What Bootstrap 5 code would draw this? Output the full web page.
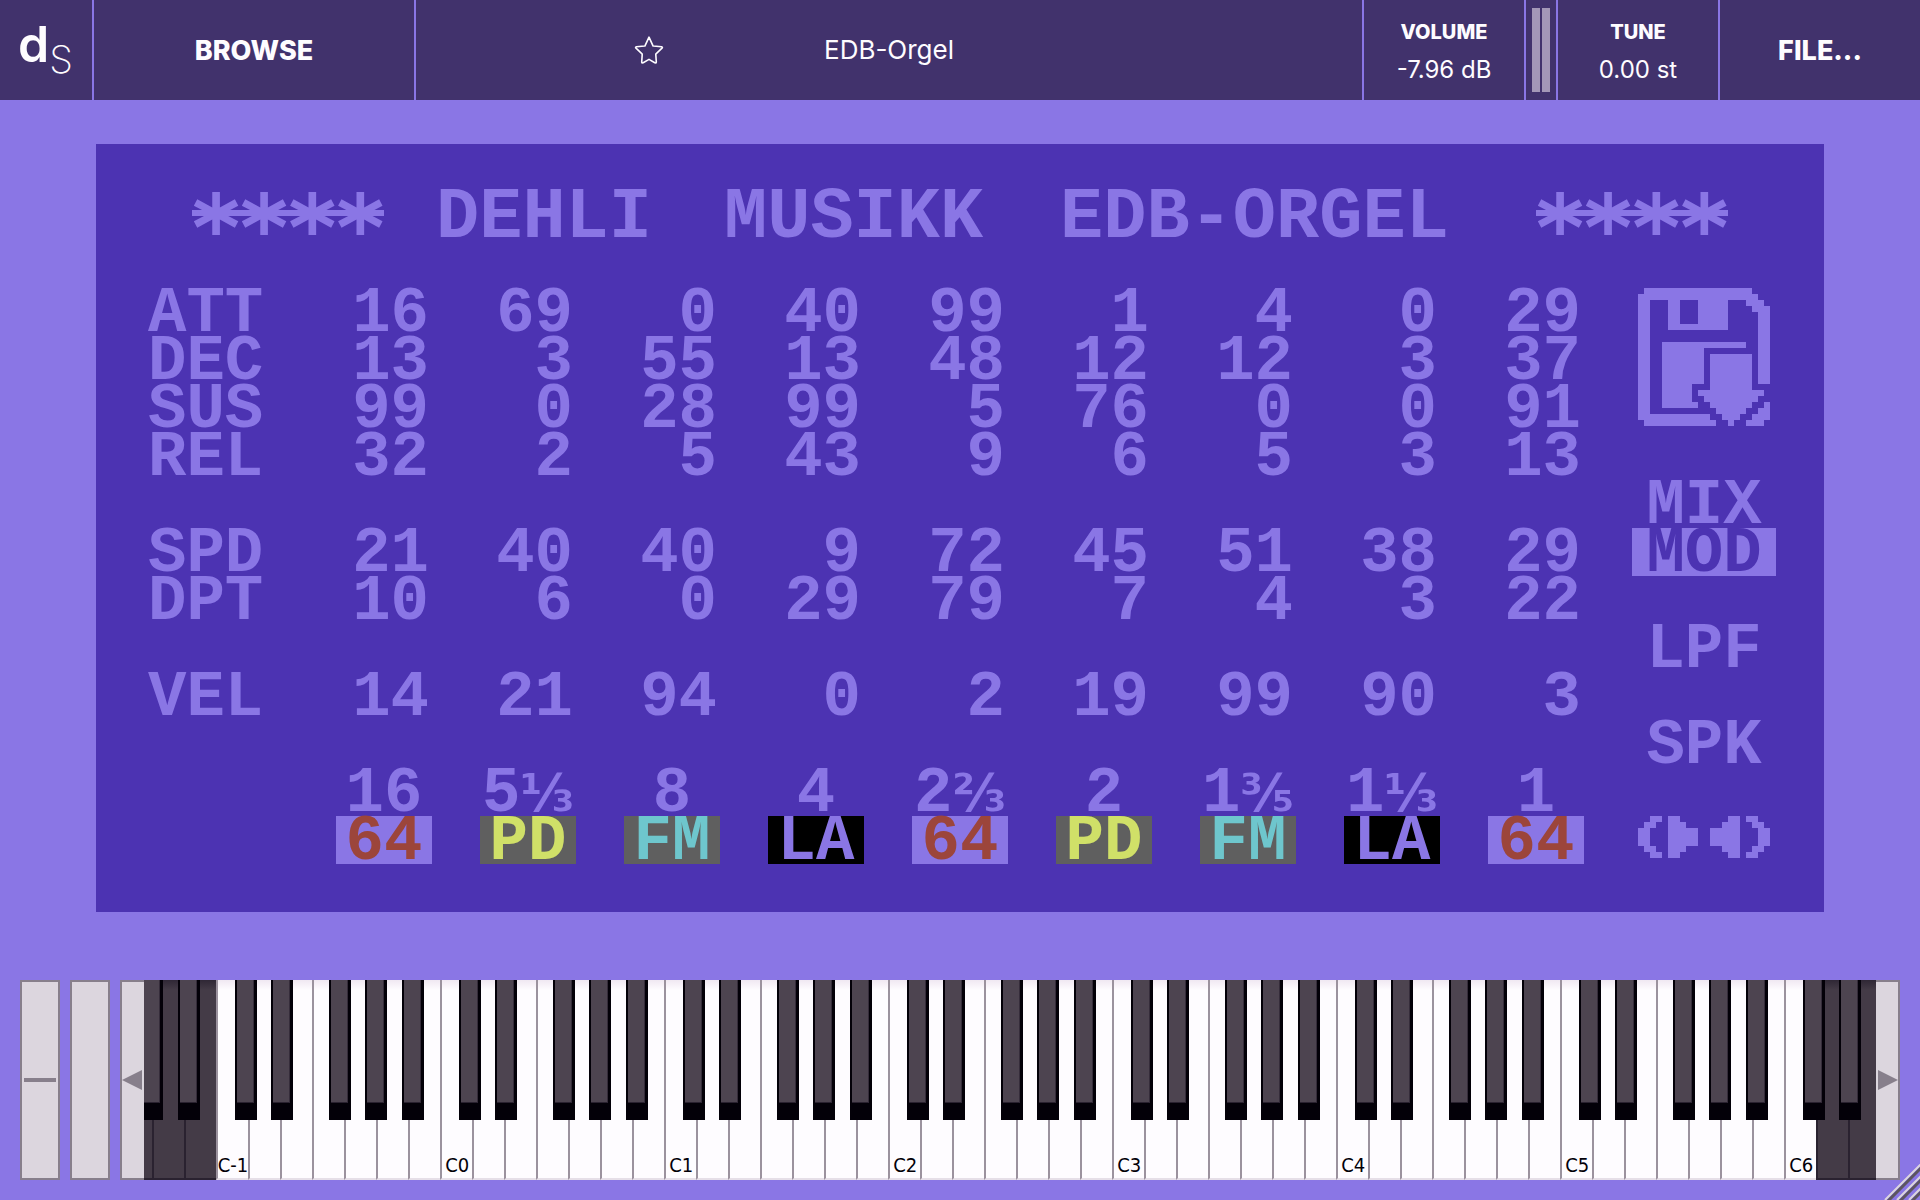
<!DOCTYPE html>
<html lang="en">
<head>
<meta charset="utf-8">
<meta name="viewport" content="width=device-width, initial-scale=1">
<title>EDB-Orgel</title>
<link href="https://cdn.jsdelivr.net/npm/bootstrap@5.3.0/dist/css/bootstrap.min.css" rel="stylesheet">
<script src="https://cdn.jsdelivr.net/npm/bootstrap@5.3.0/dist/js/bootstrap.bundle.min.js"></script>
<style>
:root { --lilac:#8a76e5; --indigo:#4c33b2; --plum:#41326c; --paper:#fefcff; --wheel:#dcd6de; --edge:#877f8b; }
body { background:var(--lilac); color:var(--paper); font-family:Inter, sans-serif; min-height:100vh; overflow-x:hidden; }
button { background:none; border:0; padding:0; color:inherit; }

/* top bar */
.topbar { height:100px; background:var(--plum); }
.topbar > * + * { border-left:2px solid var(--lilac); }
.brand { width:92px; padding:12px 0 0 18px; color:var(--paper); text-decoration:none; }
.brand-d { font-size:50px; line-height:64px; font-weight:600; }
.brand-s { font-size:38px; line-height:60px; font-weight:200; margin-top:17px; }
.big-label { font-size:27px; font-weight:800; padding-top:2px; }
.browse { width:322px; }
.file { width:202px; }
.preset { display:grid; grid-template-columns:1fr 1fr; align-items:center; justify-items:center; }
.preset > * { grid-row:1; }
.preset .star { grid-column:1; padding-right:8px; }
.preset .title { grid-column:1 / 3; font-size:26px; line-height:32px; }
.knob { width:162px; gap:8px; padding-top:4px; }
.knob label { font-size:20px; line-height:28px; font-weight:800; }
.knob output { font-size:24px; line-height:32px; padding:0; }
.meter { width:32px; padding:8px 6px; gap:2px; }
.meter span { background:#a397b7; width:8px; }

/* screen */
.screen { width:90%; margin:44px auto 68px; padding:48px; background:var(--indigo); color:var(--lilac);
  font-family:"Liberation Mono", monospace; font-weight:700; font-size:64px; line-height:44px; }
.headline { display:grid; grid-template-columns:5fr 6fr 7fr 10fr 5fr; height:48px; margin:0 0 48px; padding-left:48px;
  font-size:72px; font-weight:700; line-height:52px; white-space:nowrap; }
.headline > span { min-width:0; padding-left:4px; }
.headline .stars { height:42px; font-family:"DejaVu Sans", sans-serif; font-size:92px; line-height:76px; width:192px; position:relative; padding:0; }
.stars::after { content:""; position:absolute; left:0; right:0; top:18px; height:6px; background:var(--lilac); }
.params { table-layout:fixed; width:100%; border-collapse:collapse; }
.params col:first-child { width:192px; }
.params tr { height:48px; }
.params th, .params td { padding:4px 0 0; vertical-align:top; white-space:nowrap; height:48px; }
.params th { padding-left:4px; }
.params td { text-align:right; padding-right:51px; }
.params .feet td { text-align:center; padding-right:48px; }
.params .kinds td { text-align:left; padding:0 48px 0 0; }
.frac { font-family:"DejaVu Sans", sans-serif; font-size:52px; line-height:40px; }
.kind { display:flex; justify-content:center; width:96px; height:48px; padding-top:4px; font-weight:700; line-height:44px; }
.k-64 { background:var(--lilac); color:#9c453b; }
.k-pd { background:#5f5f5f; color:#d0e068; }
.k-fm { background:#5f5f5f; color:#6ec6cd; }
.k-la { background:#000; color:var(--lilac); }
.side { width:144px; flex:none; }
.side button { height:48px; padding-top:4px; font-weight:700; line-height:44px; text-align:center; white-space:nowrap; }
.side .save { height:192px; padding:0 0 0 6px; display:flex; }
.side .lit { background:var(--lilac); color:var(--indigo); }
.side svg { fill:currentColor; shape-rendering:crispEdges; }
.side .spk { padding:0 0 0 6px; display:flex; }

/* keyboard */
.deck { height:200px; margin:0 20px; gap:10px; }
.wheel { width:40px; background:var(--wheel); border:2px solid var(--edge); padding:0 2px; }
.wheel i { height:4px; width:100%; background:var(--edge); }
.shift { width:24px; background:var(--wheel); border:2px solid var(--edge); display:flex; align-items:center; }
.shift.down { border-right:0; }
.shift.up { border-left:0; justify-content:flex-end; }
.shift svg { fill:var(--edge); flex:none; }
.keybed { overflow:hidden; }
.ivory { position:relative; flex:0 0 32px; background:linear-gradient(#f0e8f2, var(--paper) 10px); border-left:2px solid #9b929e;
  border-bottom:2px solid #e6dfe8; color:#030008; font:20px/24px "DejaVu Sans Condensed", "Noto Sans", sans-serif; display:flex; align-items:flex-end; justify-content:center; padding-bottom:1px; white-space:nowrap; }
.ivory:first-child { margin-left:-24px; }
.ivory.off { background:linear-gradient(#2f2735, #443b47 10px); border-color:#2a2230; }
.ebony { position:absolute; z-index:1; top:0; width:22px; height:140px; background:#030008; padding:0 3px 17px 2px; display:flex; }
.ebony::before { content:""; flex:1; background:#4d4450; border-right:1px solid #352c3a; border-bottom:1px solid #2a2230; }
.ebony.c { left:17px; } .ebony.d { left:21px; } .ebony.f { left:15px; } .ebony.g { left:19px; } .ebony.a { left:24px; }
.grip { position:fixed; right:0; bottom:0; }
</style>
</head>
<body>
<header class="topbar d-flex">
  <a href="#" class="brand d-flex align-items-start" aria-label="About"><span class="brand-d">d</span><span class="brand-s">S</span></a>
  <button class="browse big-label" type="button">BROWSE</button>
  <div class="preset flex-fill">
    <button class="star" type="button" aria-label="Favourite"><svg class="d-block" width="30" height="30" viewBox="0 0 30 30" fill="none" stroke="#fefcff" stroke-width="1.6" stroke-linejoin="round"><path d="M15 2.2 18.9 10.7 Q19 11 19.4 11 L27.6 11.8 Q29 12.2 28 13.2 L22 18.8 Q21.7 19.2 21.8 19.6 L22.3 27 Q22 28.6 20.8 27.7 L15 24.4 9.2 27.7 Q8 28.6 7.7 27 L8.2 19.6 Q8.300 19.200 8 18.800 L2 13.200 Q1 12.200 2.400 11.800 L10.600 11 Q11 11 11.100 10.700Z"/></svg></button>
    <span class="title">EDB-Orgel</span>
  </div>
  <div class="knob d-flex flex-column align-items-center justify-content-center"><label for="vol">VOLUME</label><output id="vol">-7.96 dB</output></div>
  <div class="meter d-flex"><span></span><span></span></div>
  <div class="knob d-flex flex-column align-items-center justify-content-center"><label for="tune">TUNE</label><output id="tune">0.00 st</output></div>
  <button class="file big-label" type="button">FILE...</button>
</header>

<main class="screen">
  <h1 class="headline"><span class="stars">****</span><span>DEHLI</span><span>MUSIKK</span><span>EDB-ORGEL</span><span class="stars">****</span></h1>
  <div class="d-flex">
    <div class="flex-fill">
      <table class="params">
        <colgroup><col><col span="9"></colgroup>
        <tbody>
          <tr><th>ATT</th><td>16</td><td>69</td><td>0</td><td>40</td><td>99</td><td>1</td><td>4</td><td>0</td><td>29</td></tr>
          <tr><th>DEC</th><td>13</td><td>3</td><td>55</td><td>13</td><td>48</td><td>12</td><td>12</td><td>3</td><td>37</td></tr>
          <tr><th>SUS</th><td>99</td><td>0</td><td>28</td><td>99</td><td>5</td><td>76</td><td>0</td><td>0</td><td>91</td></tr>
          <tr><th>REL</th><td>32</td><td>2</td><td>5</td><td>43</td><td>9</td><td>6</td><td>5</td><td>3</td><td>13</td></tr>
          <tr><td colspan="10"></td></tr>
          <tr><th>SPD</th><td>21</td><td>40</td><td>40</td><td>9</td><td>72</td><td>45</td><td>51</td><td>38</td><td>29</td></tr>
          <tr><th>DPT</th><td>10</td><td>6</td><td>0</td><td>29</td><td>79</td><td>7</td><td>4</td><td>3</td><td>22</td></tr>
          <tr><td colspan="10"></td></tr>
          <tr><th>VEL</th><td>14</td><td>21</td><td>94</td><td>0</td><td>2</td><td>19</td><td>99</td><td>90</td><td>3</td></tr>
          <tr><td colspan="10"></td></tr>
          <tr class="feet"><th></th><td>16</td><td>5<span class="frac">⅓</span></td><td>8</td><td>4</td><td>2<span class="frac">⅔</span></td><td>2</td><td>1<span class="frac">⅗</span></td><td>1<span class="frac">⅓</span></td><td>1</td></tr>
          <tr class="kinds"><th></th>
            <td><button type="button" class="kind k-64">64</button></td><td><button type="button" class="kind k-pd">PD</button></td><td><button type="button" class="kind k-fm">FM</button></td>
            <td><button type="button" class="kind k-la">LA</button></td><td><button type="button" class="kind k-64">64</button></td><td><button type="button" class="kind k-pd">PD</button></td>
            <td><button type="button" class="kind k-fm">FM</button></td><td><button type="button" class="kind k-la">LA</button></td><td><button type="button" class="kind k-64">64</button></td></tr>
        </tbody>
      </table>
    </div>
    <div class="side d-flex flex-column">
      <button type="button" class="save" aria-label="Save"><svg width="132" height="138" viewBox="0 0 22 23">
        <path d="M1 0H19V1H20V2H21V3H22V16H20V4H19V3H18V2H15V7H5V2H2V21H12V22H13V23H1V22H0V1H1Z M7 2V6H10V2Z" fill-rule="evenodd"/>
        <path d="M4 9H18V10H11V16H9V19H10V20H4Z"/>
        <path d="M12 11H19V17H21V18H20V19H19V20H18V21H17V22H16V23H15V22H14V21H13V20H12V19H11V18H10V17H12Z"/>
        <path d="M21 19H22V22H21V23H18V22H19V21H20V20H21Z"/></svg></button>
      <button type="button">MIX</button>
      <button type="button" class="lit">MOD</button>
      <button type="button" class="mt-auto">LPF</button>
      <button type="button" class="mt-auto">SPK</button>
      <button type="button" class="spk mt-auto" aria-label="Stereo"><svg width="132" height="42" viewBox="0 0 22 7">
        <path d="M2 0H4V1H3V2H2V5H3V6H4V7H2V6H1V5H0V2H1V1H2Z M5 0H7V1H8V2H10V5H8V6H7V7H5Z M15 0H17V7H15V6H14V5H12V2H14V1H15Z M18 0H20V1H21V2H22V5H21V6H20V7H18V6H19V5H20V2H19V1H18Z"/></svg></button>
    </div>
  </div>
</main>

<footer class="deck d-flex">
  <div class="wheel d-flex align-items-center"><i></i></div>
  <div class="wheel"></div>
  <div class="d-flex flex-fill overflow-hidden">
    <button type="button" class="shift down" aria-label="Lower octave"><svg width="20" height="20" viewBox="0 0 20 20"><path d="M20 0V20L0 10Z"/></svg></button>
    <div class="keybed d-flex flex-fill" id="keybed"></div>
    <button type="button" class="shift up" aria-label="Higher octave"><svg width="20" height="20" viewBox="0 0 20 20"><path d="M0 0V20L20 10Z"/></svg></button>
  </div>
</footer>
<svg class="grip" width="36" height="36" viewBox="0 0 36 36" fill="none"><path stroke="#dcd6de" stroke-width="2" d="M1 36 37 0M13 36 37 12M25 36 37 24"/><path stroke="#5c5560" stroke-width="3" d="M4 37 38 3M16 37 38 15M28 37 38 27"/></svg>
<script>
// White keys run from the G below C-1 up to the E above C6; keys outside C-1..C6 are dimmed.
const notes = 'CDEFGAB', bed = document.getElementById('keybed');
for (let i = 4; i < 59; i++) {
  const n = notes[i % 7], octave = Math.floor(i / 7) - 2, key = document.createElement('div');
  key.className = 'ivory' + (i < 7 || i > 56 ? ' off' : '');
  if (n === 'C') key.textContent = 'C' + octave;
  if ('CDFGA'.includes(n)) {
    const black = document.createElement('span');
    black.className = 'ebony ' + n.toLowerCase();
    key.appendChild(black);
  }
  bed.appendChild(key);
}
</script>
</body>
</html>
